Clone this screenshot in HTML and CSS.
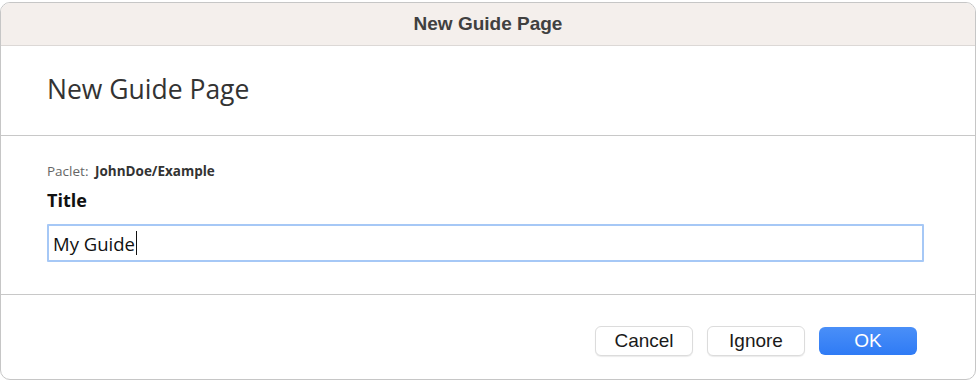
FILE: index.html
```html
<!doctype html>
<html>
<head>
<meta charset="utf-8">
<title>New Guide Page</title>
<link rel="stylesheet" href="styles.css">
</head>
<body>
<div class="window">
    <div class="titlebar">New Guide Page</div>
    <div class="head">
        <h1 class="heading">New Guide Page</h1>
    </div>
    <div class="form">
        <div class="paclet"><span class="paclet-label">Paclet:</span> <b>JohnDoe/Example</b></div>
        <div class="field-label">Title</div>
        <div class="input"><span>My Guide</span><i class="caret"></i></div>
    </div>
    <div class="actions">
        <button class="btn">Cancel</button>
        <button class="btn">Ignore</button>
        <button class="btn btn-primary">OK</button>
    </div>
</div>
</body>
</html>
```

FILE: styles.css
```css
html, body { margin: 0; padding: 0; background: #fff; }
body { width: 978px; height: 382px; padding-top: 2px; box-sizing: border-box; font-family: "Open Sans", "Noto Sans", sans-serif; color: #333; }
.window { width: 976px; height: 378px; box-sizing: border-box; border: 1px solid #c6c6c6; border-radius: 10px; overflow: hidden; display: flex; flex-direction: column; background: #fff; }
.titlebar { height: 42px; line-height: 42px; background: #f4efec; border-bottom: 1px solid #dcd8d6; text-align: center; font-family: "Liberation Sans", Arial, sans-serif; font-weight: bold; font-size: 19px; color: #404040; }
.head { height: 89px; border-bottom: 1px solid #c8c8c8; padding-left: 46px; display: flex; align-items: center; }
.heading { margin: 0; font-weight: normal; font-size: 26.5px; color: #333; padding-bottom: 4px; }
.form { height: 159px; border-bottom: 1px solid #c8c8c8; padding: 26px 51px 0 46px; box-sizing: border-box; }
.paclet { font-size: 13.5px; color: #333; line-height: 18px; }
.paclet-label { color: #666; margin-right: 3px; }
.field-label { font-weight: bold; font-size: 18px; color: #111; margin-top: 8px; line-height: 24px; }
.input { margin-top: 12px; height: 38px; box-sizing: border-box; border: 2px solid #a6c8f6; border-radius: 1px; padding: 0 4px; display: flex; align-items: center; font-size: 18.5px; color: #111; }
.caret { display: inline-block; width: 1.5px; height: 24px; background: #111; margin-left: 1px; }
.actions { flex: 1; display: flex; justify-content: flex-end; align-items: center; gap: 14px; padding: 8px 58px 0 0; }
.btn { width: 98px; height: 30px; border: 1px solid #dcdcdc; border-radius: 6px; background: #fff; box-shadow: 0 1px 1px rgba(0,0,0,0.08); font-family: "Liberation Sans", Arial, sans-serif; font-size: 19px; color: #1a1a1a; padding: 0; }
.btn-primary { height: 28px; border: none; background: linear-gradient(#4a8ff8, #2f7bf5); color: #fff; box-shadow: none; }
```
